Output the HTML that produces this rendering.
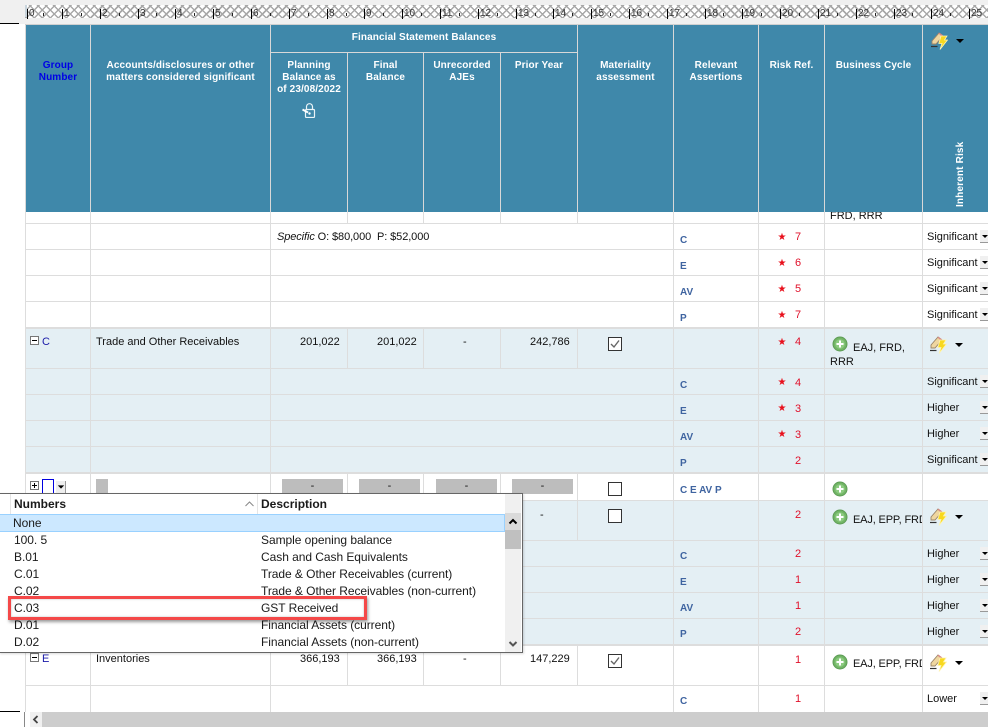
<!DOCTYPE html>
<html><head><meta charset="utf-8"><style>
html,body{margin:0;padding:0;background:#fff}
#p{position:relative;width:988px;height:727px;overflow:hidden;background:#fff;font:11px "Liberation Sans",Arial,sans-serif;color:#111}
#p div,#p span.a,#p svg{position:absolute}
.t{white-space:nowrap;line-height:12px}
.h{background:#ddd;height:1px}
.v{background:#ddd;width:1px}
.w{background:#d8d8d8;width:1px}
.hd{white-space:nowrap;line-height:12px;color:#fff;font-weight:bold;font-size:10px;letter-spacing:.12px;text-align:center}
.as{white-space:nowrap;line-height:12px;left:680px;font-weight:bold;font-size:10px;color:#3f64a0}
.r{white-space:nowrap;line-height:12px;left:795px;width:6px;text-align:center;color:#e0102a;font-size:11px;margin-top:1px}
.s{white-space:nowrap;line-height:10px;left:777px;width:10px;text-align:center;color:#e8101c;font:10px/10px "DejaVu Sans",sans-serif}
.l{white-space:nowrap;line-height:12px;left:927px;font-size:11px;letter-spacing:-.02px}
.dd{left:980px;width:8px;height:12px;background:#f0f0f0;border-bottom:1px solid #999}
.dd:after,.ar:after{content:"";position:absolute;left:2px;top:5px;border:3px solid transparent;border-top:3px solid #000;border-bottom:0}
.ar{width:8px;height:4px}
.ar:after{left:0;top:0;border-width:4px 4px 0;border-top-color:#000;border-left-color:transparent;border-right-color:transparent}
.g{background:#bdbdbd;height:15px;top:479px;text-align:center;line-height:15px;font-size:11px}
.cb{width:12px;height:12px;border:1px solid #333;background:#fff}
.n{white-space:nowrap;line-height:12px;left:300px;text-align:right}
.rl{font-size:12px;letter-spacing:-.05px;line-height:14px;white-space:nowrap;color:#1a1a1a}
.ru{top:9px;font-size:10px;line-height:9px;border-left:1px solid #000;padding-left:1px;height:10px;color:#333;white-space:nowrap}
.mn{width:1px;height:3px;background:#222;top:13px}
</style></head><body><div id="p">
<svg width="0" height="0" style="position:absolute"><defs>
<symbol id="pen" viewBox="0 0 18 18"><path d="M2 9 L9 1 L13 4 L6 12 L2 12 Z" fill="#efd6a0" stroke="#9a8468" stroke-width=".9"/><path d="M8.500 1.500 L9.500 .8 L13 3.300 L12 4.800 Z" fill="#d88a86"/><path d="M1 14.500 L7.500 14.500" stroke="#333" stroke-width="1.200"/><path d="M11 4 L17 4 L14.500 8 L17.500 8 L10 17.500 L12 11.500 L8.800 11.500 Z" fill="#f8d81e" stroke="#fff4b0" stroke-width=".8"/></symbol>
<symbol id="plus" viewBox="0 0 16 16"><circle cx="8" cy="8" r="7" fill="#72b566" stroke="#5d9c55"/><circle cx="8" cy="8" r="4.800" fill="#8ccb80"/><path d="M4.500 8H11.500M8 4.500V11.500" stroke="#fff" stroke-width="2"/></symbol>
<symbol id="chk" viewBox="0 0 14 14"><path d="M3 7 L6 10 L11 3.500" fill="none" stroke="#666" stroke-width="1.400"/></symbol>
</defs></svg>

<!-- ruler -->
<div style="left:0;top:0;width:988px;height:24px;background:#f0f0f0"></div>
<div style="left:25px;top:5px;width:963px;height:13px;background:repeating-linear-gradient(45deg,#a8a8a8 0 1.500px,#fff 1.500px 5.660px),#fff"></div>
<div style="left:25px;top:5px;width:963px;height:13px;background:repeating-linear-gradient(-45deg,#a8a8a8 0 1.500px,transparent 1.500px 5.660px)"></div>
<div style="left:25px;top:24px;width:963px;height:1px;background:#d0d0d0"></div>
<div style="left:0;top:23px;width:19px;height:1px;background:#000"></div>
<div style="left:25px;top:5px;width:2px;height:12px;background:#c8d4dc"></div>
<div class="ru" style="left:27px">0</div><div class="ru" style="left:62px">1</div><div class="ru" style="left:100px">2</div><div class="ru" style="left:138px">3</div><div class="ru" style="left:175px">4</div><div class="ru" style="left:213px">5</div><div class="ru" style="left:251px">6</div><div class="ru" style="left:289px">7</div><div class="ru" style="left:327px">8</div><div class="ru" style="left:364px">9</div><div class="ru" style="left:402px">10</div><div class="ru" style="left:440px">11</div><div class="ru" style="left:478px">12</div><div class="ru" style="left:516px">13</div><div class="ru" style="left:553px">14</div><div class="ru" style="left:591px">15</div><div class="ru" style="left:629px">16</div><div class="ru" style="left:667px">17</div><div class="ru" style="left:705px">18</div><div class="ru" style="left:742px">19</div><div class="ru" style="left:780px">20</div><div class="ru" style="left:818px">21</div><div class="ru" style="left:856px">22</div><div class="ru" style="left:894px">23</div><div class="ru" style="left:931px">24</div><div class="ru" style="left:969px">25</div>
<div class="mn" style="left:43px"></div><div class="mn" style="left:81px"></div><div class="mn" style="left:119px"></div><div class="mn" style="left:156px"></div><div class="mn" style="left:194px"></div><div class="mn" style="left:232px"></div><div class="mn" style="left:270px"></div><div class="mn" style="left:308px"></div><div class="mn" style="left:346px"></div><div class="mn" style="left:383px"></div><div class="mn" style="left:421px"></div><div class="mn" style="left:459px"></div><div class="mn" style="left:497px"></div><div class="mn" style="left:535px"></div><div class="mn" style="left:572px"></div><div class="mn" style="left:610px"></div><div class="mn" style="left:648px"></div><div class="mn" style="left:686px"></div><div class="mn" style="left:723px"></div><div class="mn" style="left:761px"></div><div class="mn" style="left:799px"></div><div class="mn" style="left:837px"></div><div class="mn" style="left:875px"></div><div class="mn" style="left:912px"></div><div class="mn" style="left:950px"></div>

<!-- body bands -->
<div style="left:25px;top:329px;width:963px;height:143px;background:#e4eff4"></div>
<div style="left:25px;top:501px;width:963px;height:143px;background:#e4eff4"></div>

<!-- horizontal lines -->
<div class="h" style="left:25px;top:223px;width:963px"></div>
<div class="h" style="left:25px;top:249px;width:963px"></div>
<div class="h" style="left:25px;top:275px;width:963px"></div>
<div class="h" style="left:25px;top:301px;width:963px"></div>
<div class="h" style="left:25px;top:327px;width:963px;height:2px"></div>
<div class="h" style="left:25px;top:368px;width:963px"></div>
<div class="h" style="left:25px;top:394px;width:963px"></div>
<div class="h" style="left:25px;top:420px;width:963px"></div>
<div class="h" style="left:25px;top:446px;width:963px"></div>
<div class="h" style="left:25px;top:472px;width:963px;height:2px"></div>
<div class="h" style="left:25px;top:500px;width:963px"></div>
<div class="h" style="left:25px;top:540px;width:963px"></div>
<div class="h" style="left:25px;top:566px;width:963px"></div>
<div class="h" style="left:25px;top:592px;width:963px"></div>
<div class="h" style="left:25px;top:618px;width:963px"></div>
<div class="h" style="left:25px;top:644px;width:963px;height:2px"></div>
<div class="h" style="left:25px;top:685px;width:963px"></div>

<!-- vertical lines -->
<div class="v" style="left:25px;top:25px;height:687px"></div>
<div class="v" style="left:90px;top:25px;height:687px"></div>
<div class="v" style="left:270px;top:25px;height:687px"></div>
<div class="v" style="left:673px;top:25px;height:687px"></div>
<div class="v" style="left:758px;top:25px;height:687px"></div>
<div class="v" style="left:824px;top:25px;height:687px"></div>
<div class="v" style="left:922px;top:25px;height:687px"></div>
<div class="v" style="left:347px;top:212px;height:11px"></div><div class="v" style="left:423px;top:212px;height:11px"></div><div class="v" style="left:500px;top:212px;height:11px"></div><div class="v" style="left:577px;top:212px;height:11px"></div>
<div class="v" style="left:347px;top:329px;height:39px"></div><div class="v" style="left:423px;top:329px;height:39px"></div><div class="v" style="left:500px;top:329px;height:39px"></div><div class="v" style="left:577px;top:329px;height:39px"></div>
<div class="v" style="left:347px;top:474px;height:66px"></div><div class="v" style="left:423px;top:474px;height:66px"></div><div class="v" style="left:500px;top:474px;height:66px"></div><div class="v" style="left:577px;top:474px;height:66px"></div>
<div class="v" style="left:347px;top:646px;height:39px"></div><div class="v" style="left:423px;top:646px;height:39px"></div><div class="v" style="left:500px;top:646px;height:39px"></div><div class="v" style="left:577px;top:646px;height:39px"></div>

<!-- body text -->
<div class="t" style="left:830px;top:210px">FRD, RRR</div>
<div class="t" style="left:277px;top:231px;letter-spacing:-.1px"><i>Specific</i> O: $80,000&nbsp; P: $52,000</div>

<div class="as" style="top:235px">C</div><div class="s" style="top:233px">★</div><div class="r" style="top:230px">7</div><div class="l" style="top:231px">Significant</div><div class="dd" style="top:230px"></div>
<div class="as" style="top:261px">E</div><div class="s" style="top:259px">★</div><div class="r" style="top:256px">6</div><div class="l" style="top:257px">Significant</div><div class="dd" style="top:256px"></div>
<div class="as" style="top:287px">AV</div><div class="s" style="top:285px">★</div><div class="r" style="top:282px">5</div><div class="l" style="top:283px">Significant</div><div class="dd" style="top:282px"></div>
<div class="as" style="top:313px">P</div><div class="s" style="top:311px">★</div><div class="r" style="top:308px">7</div><div class="l" style="top:309px">Significant</div><div class="dd" style="top:308px"></div>

<!-- C row -->
<div style="left:30px;top:336px;width:7px;height:7px;border:1px solid #777;background:#fff"></div><div style="left:32px;top:340px;width:5px;height:1px;background:#000"></div>
<div class="t" style="left:42px;top:336px;color:#1a1aa8">C</div>
<div class="t" style="left:96px;top:336px">Trade and Other Receivables</div>
<div class="n" style="top:336px;width:39px">201,022</div>
<div class="n" style="top:336px;left:377px;width:39px">201,022</div>
<div class="t" style="left:463px;top:336px">-</div>
<div class="n" style="top:336px;left:530px;width:39px">242,786</div>
<div class="cb" style="left:608px;top:337px"></div><svg style="left:608px;top:337px" width="14" height="14"><use href="#chk"/></svg>
<div class="s" style="top:338px">★</div><div class="r" style="top:335px">4</div>
<svg style="left:832px;top:336px" width="16" height="16"><use href="#plus"/></svg>
<div class="t" style="left:853px;top:342px">EAJ, FRD,</div><div class="t" style="left:830px;top:356px">RRR</div>
<svg style="left:929px;top:336px" width="18" height="18"><use href="#pen"/></svg><div class="ar" style="left:955px;top:343px"></div>

<div class="as" style="top:380px">C</div><div class="s" style="top:378px">★</div><div class="r" style="top:376px">4</div><div class="l" style="top:376px">Significant</div><div class="dd" style="top:375px"></div>
<div class="as" style="top:406px">E</div><div class="s" style="top:404px">★</div><div class="r" style="top:402px">3</div><div class="l" style="top:402px">Higher</div><div class="dd" style="top:401px"></div>
<div class="as" style="top:432px">AV</div><div class="s" style="top:430px">★</div><div class="r" style="top:428px">3</div><div class="l" style="top:428px">Higher</div><div class="dd" style="top:427px"></div>
<div class="as" style="top:458px">P</div><div class="r" style="top:454px">2</div><div class="l" style="top:454px">Significant</div><div class="dd" style="top:453px"></div>

<!-- new row -->
<div style="left:30px;top:481px;width:7px;height:7px;border:1px solid #777;background:#fff"></div><div style="left:32px;top:485px;width:5px;height:1px;background:#000"></div><div style="left:34px;top:483px;width:1px;height:5px;background:#000"></div>
<div style="left:42px;top:479px;width:10px;height:14px;border:1px solid #0000e0;background:#fff"></div>
<div style="left:56px;top:481px;width:9px;height:12px;background:#eee;border-right:1px solid #999;border-bottom:1px solid #999"></div><div class="ar" style="left:57px;top:485px;transform:scale(.8)"></div>
<div style="left:96px;top:479px;width:12px;height:15px;background:#bdbdbd"></div>
<div class="g" style="left:282px;width:61px">-</div><div class="g" style="left:359px;width:61px">-</div><div class="g" style="left:436px;width:61px">-</div><div class="g" style="left:512px;width:61px">-</div>
<div class="cb" style="left:608px;top:482px"></div>
<div class="as" style="top:485px">C E AV P</div>
<svg style="left:832px;top:481px" width="16" height="16"><use href="#plus"/></svg>

<!-- D row -->
<div class="t" style="left:540px;top:509px">-</div>
<div class="cb" style="left:608px;top:509px"></div>
<div class="r" style="top:508px">2</div>
<svg style="left:832px;top:509px" width="16" height="16"><use href="#plus"/></svg>
<div class="t" style="left:853px;top:514px;width:69px;overflow:hidden;letter-spacing:-.15px">EAJ, EPP, FRD</div>
<svg style="left:929px;top:508px" width="18" height="18"><use href="#pen"/></svg><div class="ar" style="left:955px;top:515px"></div>

<div class="as" style="top:551px">C</div><div class="r" style="top:547px">2</div><div class="l" style="top:548px">Higher</div><div class="dd" style="top:547px"></div>
<div class="as" style="top:577px">E</div><div class="r" style="top:573px">1</div><div class="l" style="top:574px">Higher</div><div class="dd" style="top:573px"></div>
<div class="as" style="top:603px">AV</div><div class="r" style="top:599px">1</div><div class="l" style="top:600px">Higher</div><div class="dd" style="top:599px"></div>
<div class="as" style="top:629px">P</div><div class="r" style="top:625px">2</div><div class="l" style="top:626px">Higher</div><div class="dd" style="top:625px"></div>

<!-- E row -->
<div style="left:30px;top:653px;width:7px;height:7px;border:1px solid #777;background:#fff"></div><div style="left:32px;top:657px;width:5px;height:1px;background:#000"></div>
<div class="t" style="left:42px;top:653px;color:#1a1aa8">E</div>
<div class="t" style="left:96px;top:653px">Inventories</div>
<div class="n" style="top:653px;width:39px">366,193</div>
<div class="n" style="top:653px;left:377px;width:39px">366,193</div>
<div class="t" style="left:463px;top:653px">-</div>
<div class="n" style="top:653px;left:530px;width:39px">147,229</div>
<div class="cb" style="left:608px;top:654px"></div><svg style="left:608px;top:654px" width="14" height="14"><use href="#chk"/></svg>
<div class="r" style="top:653px">1</div>
<svg style="left:832px;top:654px" width="16" height="16"><use href="#plus"/></svg>
<div class="t" style="left:853px;top:658px;width:69px;overflow:hidden;letter-spacing:-.15px">EAJ, EPP, FRD</div>
<svg style="left:929px;top:654px" width="18" height="18"><use href="#pen"/></svg><div class="ar" style="left:955px;top:661px"></div>

<div class="as" style="top:696px">C</div><div class="r" style="top:692px">1</div><div class="l" style="top:693px">Lower</div><div class="dd" style="top:692px"></div>

<!-- header -->
<div style="left:25px;top:25px;width:963px;height:187px;background:#3f88aa"></div>
<div class="w" style="left:25px;top:25px;height:187px"></div>
<div class="w" style="left:90px;top:25px;height:187px"></div>
<div class="w" style="left:270px;top:25px;height:187px"></div>
<div class="w" style="left:347px;top:52px;height:160px"></div>
<div class="w" style="left:423px;top:52px;height:160px"></div>
<div class="w" style="left:500px;top:52px;height:160px"></div>
<div class="w" style="left:577px;top:25px;height:187px"></div>
<div class="w" style="left:673px;top:25px;height:187px"></div>
<div class="w" style="left:758px;top:25px;height:187px"></div>
<div class="w" style="left:824px;top:25px;height:187px"></div>
<div class="w" style="left:922px;top:25px;height:187px"></div>
<div style="left:270px;top:52px;width:307px;height:1px;background:#d8d8d8"></div>

<div class="hd" style="left:26px;width:64px;top:60px;color:#0000e6">Group<br>Number</div>
<div class="hd" style="left:91px;width:179px;top:60px">Accounts/disclosures or other<br>matters considered significant</div>
<div class="hd" style="left:271px;width:306px;top:32px">Financial Statement Balances</div>
<div class="hd" style="left:271px;width:76px;top:60px">Planning<br>Balance as<br>of 23/08/2022</div>
<div class="hd" style="left:348px;width:75px;top:60px">Final<br>Balance</div>
<div class="hd" style="left:424px;width:76px;top:60px">Unrecorded<br>AJEs</div>
<div class="hd" style="left:501px;width:76px;top:60px">Prior Year</div>
<div class="hd" style="left:578px;width:95px;top:60px">Materiality<br>assessment</div>
<div class="hd" style="left:674px;width:84px;top:60px">Relevant<br>Assertions</div>
<div class="hd" style="left:759px;width:65px;top:60px">Risk Ref.</div>
<div class="hd" style="left:825px;width:97px;top:60px">Business Cycle</div>
<svg style="left:302px;top:103px" width="14" height="15" viewBox="0 0 14 15"><rect x="3.500" y="6.500" width="9" height="8" rx="1" fill="none" stroke="#eaf4f8" stroke-width="1.200"/><path d="M4.500 6V3.500a3 2.800 0 0 1 6 0V6" fill="none" stroke="#eaf4f8" stroke-width="1.200"/><path d="M.5 6.500L6 9.500" stroke="#fff" stroke-width="2"/><circle cx="7.500" cy="10.500" r="1.200" fill="#fff"/></svg>
<svg style="left:930px;top:32px" width="18" height="18"><use href="#pen"/></svg><div class="ar" style="left:956px;top:39px"></div>
<div class="t" style="left:955px;top:140px;width:12px;height:67px;writing-mode:vertical-rl;transform:rotate(180deg);color:#fff;font-size:10px;letter-spacing:.15px;text-align:left;font-weight:bold">Inherent Risk</div>

<!-- bottom scrollbar -->
<div style="left:24px;top:712px;width:1px;height:15px;background:#888"></div>
<div style="left:0;top:711px;width:20px;height:1px;background:#000"></div>
<div style="left:42px;top:712px;width:946px;height:15px;background:#cdcdcd"></div>
<div style="left:30px;top:712px;width:12px;height:15px;background:#f0f0f0"></div>
<svg style="left:30px;top:712px" width="12" height="15"><path d="M7.500 4L4 7.500L7.500 11" fill="none" stroke="#444" stroke-width="1.800"/></svg>

<!-- popup -->
<div style="left:-1px;top:493px;width:522px;height:158px;border:1px solid #666;background:#fff;box-shadow:1px 1px 2px rgba(0,0,0,.15)"></div>
<div style="left:10px;top:494px;width:1px;height:20px;background:#e5e5e5"></div>
<div style="left:257px;top:494px;width:1px;height:20px;background:#e5e5e5"></div>
<div class="rl" style="left:14px;top:497px;font-weight:bold;letter-spacing:0">Numbers</div>
<div class="rl" style="left:261px;top:497px;font-weight:bold;letter-spacing:0">Description</div>
<svg style="left:245px;top:501px" width="9" height="6"><path d="M.5 5L4.500 1L8.500 5" fill="none" stroke="#888"/></svg>
<div style="left:0;top:514px;width:504px;height:16px;background:#cce8ff;border:1px solid #99d1ff;border-left:0"></div>
<div class="rl" style="left:13px;top:516px">None</div>
<div class="rl" style="left:14px;top:533px">100. 5</div><div class="rl" style="left:261px;top:533px">Sample opening balance</div>
<div class="rl" style="left:14px;top:550px">B.01</div><div class="rl" style="left:261px;top:550px">Cash and Cash Equivalents</div>
<div class="rl" style="left:14px;top:567px">C.01</div><div class="rl" style="left:261px;top:567px">Trade &amp; Other Receivables (current)</div>
<div class="rl" style="left:14px;top:584px">C.02</div><div class="rl" style="left:261px;top:584px">Trade &amp; Other Receivables (non-current)</div>
<div class="rl" style="left:14px;top:601px">C.03</div><div class="rl" style="left:261px;top:601px">GST Received</div>
<div class="rl" style="left:14px;top:618px">D.01</div><div class="rl" style="left:261px;top:618px">Financial Assets (current)</div>
<div class="rl" style="left:14px;top:635px">D.02</div><div class="rl" style="left:261px;top:635px">Financial Assets (non-current)</div>
<div style="left:505px;top:494px;width:16px;height:158px;background:#f0f0f0"></div>
<div style="left:505px;top:513px;width:16px;height:17px;background:#dadada"></div>
<svg style="left:505px;top:513px" width="16" height="17"><path d="M4.500 10.500L8 7L11.500 10.500" fill="none" stroke="#000" stroke-width="2"/></svg>
<div style="left:505px;top:530px;width:16px;height:19px;background:#c0c0c0"></div>
<svg style="left:505px;top:636px" width="16" height="16"><path d="M4.500 6L8 9.500L11.500 6" fill="none" stroke="#555" stroke-width="2"/></svg>
<!-- red highlight -->
<div style="left:8px;top:596px;width:353px;height:18px;border:3px solid #f44848;box-shadow:1px 2px 3px rgba(0,0,0,.4),inset 0 0 2px rgba(0,0,0,.25)"></div>
</div></body></html>
